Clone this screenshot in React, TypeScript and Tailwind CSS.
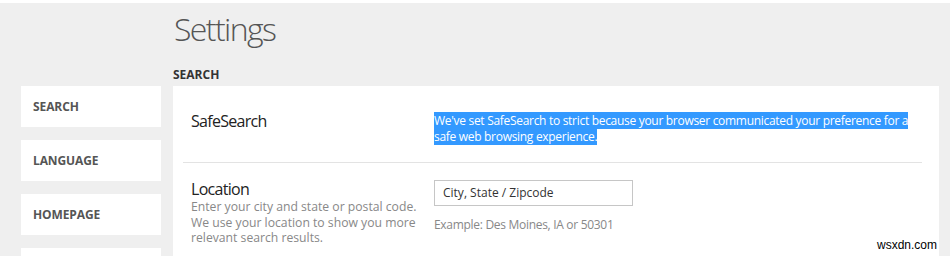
import React from "react";

const navItems = ["SEARCH", "LANGUAGE", "HOMEPAGE", ""];

export default function App() {
  return (
    <div
      className="relative w-[950px] h-[256px] overflow-hidden bg-[#efefef]"
      style={{ fontFamily: '"Open Sans", "Noto Sans", sans-serif' }}
    >
      <div className="h-[3px] bg-white" />
      <div className="flex">
        <aside className="w-[161px] pl-[21px] pt-[83px] flex flex-col gap-[13px] shrink-0">
          {navItems.map((item, i) => (
            <div
              key={i}
              className="h-[41px] bg-white pl-[12px] flex items-center text-[12px] font-bold text-[#555] tracking-[-0.1px]"
            >
              {item}
            </div>
          ))}
        </aside>
        <main className="ml-[12px] w-[766px] shrink-0">
          <h1 className="mt-[6px] text-[32px] leading-[40px] font-light text-[#555] tracking-[-1.6px] pl-[1px]">
            Settings
          </h1>
          <h2 className="mt-[18px] text-[12px] leading-[16px] font-bold text-[#333]">
            SEARCH
          </h2>
          <div className="mt-[3px] bg-white h-[200px]">
            <div className="ml-[10px] mr-[17px]">
              <div className="grid grid-cols-[251px_1fr] pt-[25px] pb-[17px] border-b border-[#e3e3e3]">
                <div className="pl-[8px] text-[16px] leading-[20px] text-[#222] tracking-[-0.7px]">
                  SafeSearch
                </div>
                <div className="mt-[2px] text-[12px] leading-[16px] text-white tracking-[-0.3px]">
                  <span className="bg-[#3399ff] whitespace-nowrap">
                    We've set SafeSearch to strict because your browser communicated your preference for a
                  </span>
                  <br />
                  <span className="bg-[#3399ff] whitespace-nowrap">safe web browsing experience.</span>
                </div>
              </div>
              <div className="grid grid-cols-[251px_1fr] pt-[17px]">
                <div className="pl-[8px]">
                  <div className="text-[16px] leading-[19px] text-[#222] tracking-[-0.7px]">Location</div>
                  <div className="text-[12.2px] leading-[15.5px] text-[#888] whitespace-nowrap">
                    Enter your city and state or postal code.
                    <br />
                    We use your location to show you more
                    <br />
                    relevant search results.
                  </div>
                </div>
                <div>
                  <div className="w-[199px] h-[26px] border border-[#c6c6c6] flex items-center pl-[8px] text-[12px] text-[#333]">
                    City, State / Zipcode
                  </div>
                  <div className="mt-[11px] text-[12px] leading-[16px] text-[#888] tracking-[-0.3px]">
                    Example: Des Moines, IA or 50301
                  </div>
                </div>
              </div>
            </div>
          </div>
        </main>
      </div>
      <div
        className="absolute left-[877px] top-[238px] text-[12px] leading-[14px] text-black"
        style={{ fontFamily: '"Liberation Sans", Arial, sans-serif' }}
      >
        wsxdn.com
      </div>
    </div>
  );
}
